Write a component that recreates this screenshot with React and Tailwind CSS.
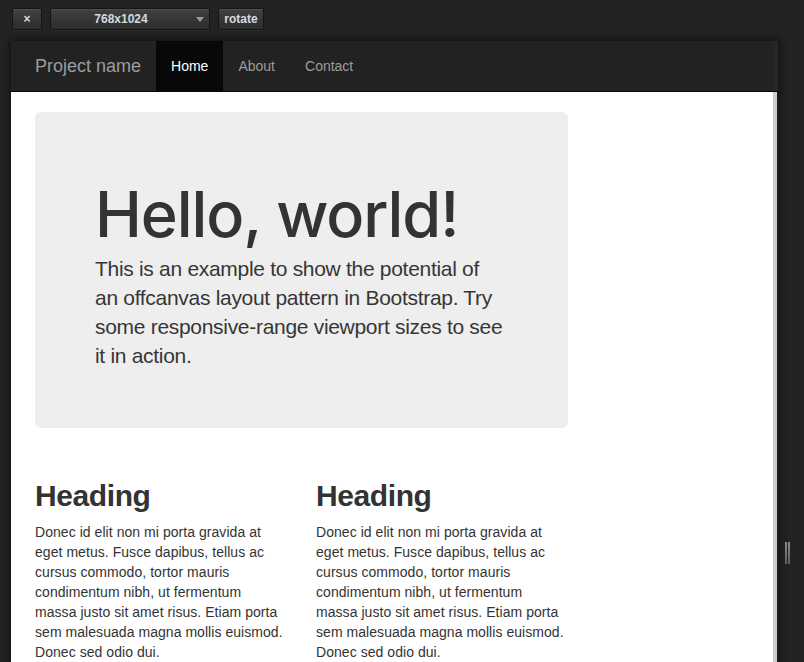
import React from 'react';

const toolBtn =
  'h-[22px] flex items-center justify-center rounded-[2px] border border-[#151515] bg-gradient-to-b from-[#414141] to-[#2c2c2c] shadow-[inset_0_1px_0_rgba(255,255,255,0.08),0_1px_0_rgba(255,255,255,0.04)] text-[12px] font-bold text-[#d4dae0]';

const navItems = [
  { label: 'Home', active: true },
  { label: 'About' },
  { label: 'Contact' },
];

const loremLines = [
  'Donec id elit non mi porta gravida at',
  'eget metus. Fusce dapibus, tellus ac',
  'cursus commodo, tortor mauris',
  'condimentum nibh, ut fermentum',
  'massa justo sit amet risus. Etiam porta',
  'sem malesuada magna mollis euismod.',
  'Donec sed odio dui.',
];

export default function App() {
  return (
    <div className="relative w-[804px] h-[662px] overflow-hidden bg-[#232323] font-['Liberation_Sans',Arial,sans-serif]">
      {/* toolbar */}
      <div className="flex items-center gap-[8px] pl-[12px] pt-[8px]">
        <div className={`${toolBtn} w-[30px]`}>×</div>
        <div className={`${toolBtn} w-[160px] relative pr-[18px]`}>
          <span>768x1024</span>
          <span className="absolute right-[5px] top-[8px] w-0 h-0 border-l-[4px] border-r-[4px] border-t-[5px] border-l-transparent border-r-transparent border-t-[#9a9a9a]"></span>
        </div>
        <div className={`${toolBtn} w-[46px]`}>rotate</div>
      </div>

      {/* device frame */}
      <div className="ml-[11px] mt-[11px] w-[768px] flex flex-col shadow-[0_0_6px_2px_rgba(0,0,0,0.45)]">
        <nav className="h-[51px] flex items-stretch bg-[#222222] border-b border-[#080808] text-[14px]">
          <div className="flex items-center pl-[24px] pr-[15px] text-[18px] text-[#9d9d9d]">Project name</div>
          {navItems.map((item) => (
            <div
              key={item.label}
              className={`flex items-center px-[15px] ${item.active ? 'bg-[#080808] text-white' : 'text-[#9d9d9d]'}`}
            >
              {item.label}
            </div>
          ))}
          <div className="flex-1"></div>
          <div className="w-[5px] bg-[#262626]"></div>
          <div className="w-[1px] bg-[#1a1a1a]"></div>
        </nav>

        <div className="flex h-[580px]">
          <main className="flex-1 bg-white text-[#333333] pl-[24px] pt-[20px]">
            <div className="w-[533px] rounded-[6px] bg-[#eeeeee] pl-[60px] pr-[40px] pt-[48px] pb-[58px]">
              <h1 className="mt-[20px] mb-[5px] text-[63px] leading-[69px] font-medium tracking-[-1.1px] font-['Inter','Liberation_Sans',sans-serif]">
                Hello, world!
              </h1>
              <p className="text-[21px] leading-[29px] tracking-[-0.3px] text-[#363636] whitespace-nowrap">
                This is an example to show the potential of
                <br />
                an offcanvas layout pattern in Bootstrap. Try
                <br />
                some responsive-range viewport sizes to see
                <br />
                it in action.
              </p>
            </div>

            <div className="mt-[51px] grid grid-cols-[251px_251px] gap-x-[30px]">
              {[0, 1].map((i) => (
                <div key={i}>
                  <h2 className="text-[30px] leading-[33px] font-bold tracking-[-0.4px] mb-[10px]">Heading</h2>
                  <p className="text-[14px] leading-[20px] tracking-[0.05px] whitespace-nowrap">
                    {loremLines.map((line, j) => (
                      <React.Fragment key={j}>
                        {line}
                        {j < loremLines.length - 1 && <br />}
                      </React.Fragment>
                    ))}
                  </p>
                </div>
              ))}
            </div>
          </main>
          <div className="w-[4px] bg-[#cccccc]"></div>
          <div className="w-[2px] bg-[#1b1b1b]"></div>
        </div>
      </div>

      {/* resize grip */}
      <div className="absolute left-[785px] top-[542px] flex gap-[1px]">
        <div className="w-[2px] h-[22px] bg-gradient-to-b from-[#8a8a8a] to-[#5e5e5e]"></div>
        <div className="w-[2px] h-[22px] bg-gradient-to-b from-[#8a8a8a] to-[#5e5e5e]"></div>
      </div>
    </div>
  );
}
